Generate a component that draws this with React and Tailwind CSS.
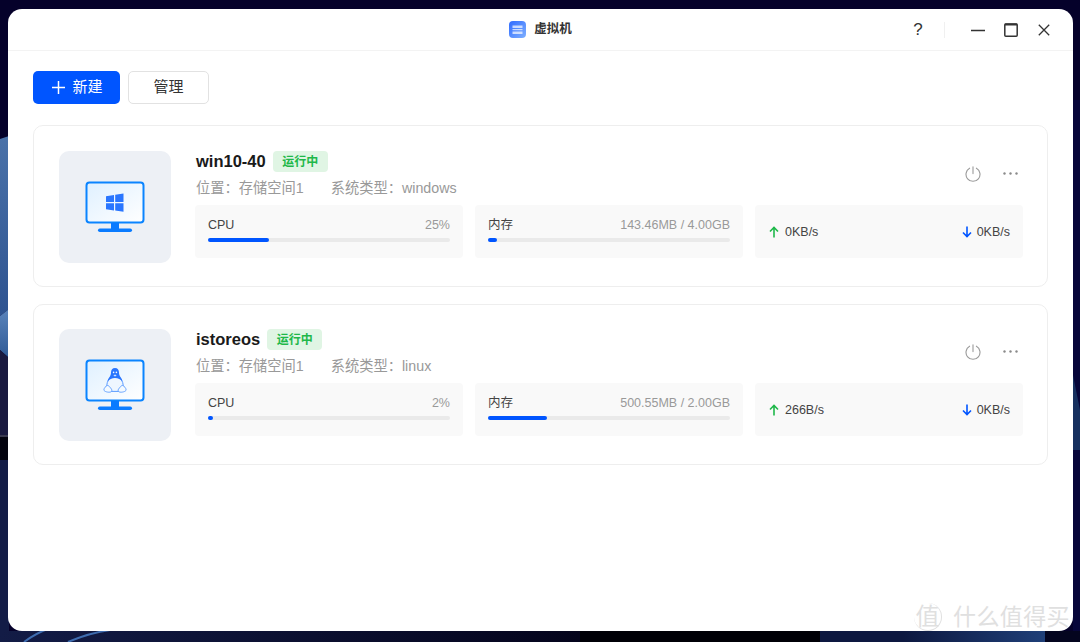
import React from 'react';

const SANS = "font-['Liberation_Sans','Noto_Sans_CJK_SC',sans-serif]";

const machines = [
  {
    name: 'win10-40',
    os: 'windows',
    cpu: 25,
    memText: '143.46MB / 4.00GB',
    mem: 3.6,
    up: '0KB/s',
    down: '0KB/s',
  },
  {
    name: 'istoreos',
    os: 'linux',
    cpu: 2,
    memText: '500.55MB / 2.00GB',
    mem: 24.4,
    up: '266B/s',
    down: '0KB/s',
  },
];

// wallpaper behind the window
const Wallpaper = () => (
  <svg className="absolute inset-0" width="1080" height="642" viewBox="0 0 1080 642">
    <defs>
      <linearGradient id="wpUpper" x1="0" y1="0" x2="0" y2="1">
        <stop offset="0" stopColor="#4a72a9" />
        <stop offset="1" stopColor="#2e5390" />
      </linearGradient>
      <linearGradient id="wpLower" x1="0" y1="0" x2="0" y2="1">
        <stop offset="0" stopColor="#5a84bb" />
        <stop offset="1" stopColor="#2f5a96" />
      </linearGradient>
      <linearGradient id="wpBottom" x1="0" y1="0" x2="1" y2="0">
        <stop offset="0" stopColor="#131c46" />
        <stop offset="1" stopColor="#04041c" />
      </linearGradient>
      <linearGradient id="wpRight" x1="0" y1="0" x2="1" y2="0">
        <stop offset="0" stopColor="#0d1840" />
        <stop offset="1" stopColor="#1f3f78" />
      </linearGradient>
    </defs>
    <rect width="1080" height="642" fill="#05012a" />
    <path d="M0 139L9 136V309L0 316Z" fill="url(#wpUpper)" />
    <path d="M0 316L9 309V358L0 350Z" fill="url(#wpLower)" />
    <path d="M0 350L9 358V435H0Z" fill="#1a1a40" />
    <rect x="0" y="435" width="9" height="2" fill="#3a3a50" />
    <rect x="0" y="437" width="9" height="23" fill="#04040f" />
    <rect x="0" y="460" width="9" height="182" fill="#131c46" />
    <rect x="0" y="631" width="580" height="11" fill="url(#wpBottom)" />
    <rect x="580" y="631" width="240" height="11" fill="#000006" />
    <rect x="820" y="631" width="83" height="11" fill="#0d1840" />
    <rect x="903" y="631" width="142" height="11" fill="url(#wpRight)" />
    <rect x="1045" y="631" width="35" height="11" fill="#04051f" />
    <path d="M24 642C32 636 42 631 50 628" stroke="#3f6db0" strokeWidth="2" fill="none" />
    <path d="M68 642C82 636 96 632 110 630" stroke="#3f6db0" strokeWidth="2" fill="none" />
    <rect x="1073" y="100" width="7" height="531" fill="#07063a" />
    <path d="M1073 375L1080 410V450H1073Z" fill="#17305f" />
  </svg>
);

const Monitor = ({ children }) => (
  <svg width="60" height="52" viewBox="0 0 60 52">
    <defs>
      <linearGradient id="screen" x1="0" y1="0" x2="1" y2="1">
        <stop offset="0" stopColor="#dff0ff" />
        <stop offset="1" stopColor="#ffffff" />
      </linearGradient>
    </defs>
    <rect x="1.5" y="1.5" width="57" height="40" rx="3" fill="url(#screen)" stroke="#0a84ff" strokeWidth="2" />
    <rect x="26" y="42" width="8" height="6" fill="#0a7bff" />
    <rect x="13" y="47.5" width="34" height="3.5" rx="1.75" fill="#0a7bff" />
    {children}
  </svg>
);

const WindowsGlyph = () => (
  <g fill="#2a76ff">
    <path d="M21 15.2L29 14V21H21Z" />
    <path d="M30.2 13.8L38.5 12.6V21H30.2Z" />
    <path d="M21 22.2H29V29.4L21 28.2Z" />
    <path d="M30.2 22.2H38.5V30.8L30.2 29.6Z" />
  </g>
);

const TuxGlyph = () => (
  <g>
    {/* body outline */}
    <path
      d="M26.2 17c-1.6 2.8-4.4 5.4-4.4 9.4 0 2.8 1.4 5 3.6 6h9.2c2.2-1 3.6-3.2 3.6-6 0-4-2.8-6.6-4.4-9.4z"
      fill="#eef6ff"
      stroke="#5a9bff"
      strokeWidth="1"
    />
    {/* head */}
    <path
      d="M30 9c-2.6 0-4 2-4 4.6 0 1.6-.4 3-1.6 4.6-1 1.3-1.8 2.8-1.8 4.4 1.6-2.2 4.4-3.6 7.4-3.6s5.8 1.4 7.4 3.6c0-1.6-.8-3.1-1.8-4.4-1.2-1.6-1.6-3-1.6-4.6C34 11 32.6 9 30 9z"
      fill="#2a76ff"
    />
    <path d="M28.4 16.4L30 15.4l1.6 1L30 17.6z" fill="#cfe3ff" />
    <circle cx="28.6" cy="13.4" r=".8" fill="#f4faff" />
    <circle cx="31.4" cy="13.4" r=".8" fill="#f4faff" />
    {/* feet */}
    <path d="M22.5 26.5c-1.8.4-3.6 2.8-3.6 4.4 0 1.6 4.6 2.9 7 2 1.4-.5 1.2-2.4-.2-3.8-1-1.1-2-2.8-3.2-2.6z" fill="#f4faff" stroke="#5a9bff" strokeWidth=".9" />
    <path d="M37.5 26.5c1.8.4 3.6 2.8 3.6 4.4 0 1.6-4.6 2.9-7 2-1.4-.5-1.2-2.4.2-3.8 1-1.1 2-2.8 3.2-2.6z" fill="#f4faff" stroke="#5a9bff" strokeWidth=".9" />
  </g>
);

const UsageCard = ({ label, value, percent }) => (
  <div className="flex-1 h-[53px] rounded bg-[#f9f9f9] px-[13px] pt-3">
    <div className="flex items-center justify-between h-4 text-[12.5px]">
      <span className="text-[#444]">{label}</span>
      <span className="text-[#999]">{value}</span>
    </div>
    <div className="mt-[5px] h-1 rounded-full bg-[#eaeaea]">
      <div className="h-1 rounded-full bg-[#0055ff]" style={{ width: `${percent}%` }} />
    </div>
  </div>
);

const UpArrow = () => (
  <svg width="10" height="12" viewBox="0 0 10 12" fill="none" stroke="#1fb84a" strokeWidth="1.6">
    <path d="M5 11.5V1.5M1 5.5L5 1.5L9 5.5" />
  </svg>
);

const DownArrow = () => (
  <svg width="10" height="12" viewBox="0 0 10 12" fill="none" stroke="#0055ff" strokeWidth="1.6">
    <path d="M5 .5V10.5M1 6.5L5 10.5L9 6.5" />
  </svg>
);

const MachineCard = ({ vm }) => (
  <div className="flex gap-6 h-[161px] first:h-[162px] first:-mt-px rounded-[10px] border border-[#eeeeee] bg-white pl-[25px] pr-6 pt-6 first:pt-[25px]">
    <div className="flex items-center justify-center w-[112px] h-[112px] shrink-0 rounded-[10px] bg-[#edf0f5]">
      <Monitor>{vm.os === 'windows' ? <WindowsGlyph /> : <TuxGlyph />}</Monitor>
    </div>
    <div className="flex-1">
      <div className="flex items-center justify-between pl-px pr-[5px]">
        <div>
          <div className="flex items-center gap-[7px] h-[21px]">
            <span className="text-[16.5px] font-bold text-[#1a1a1a]">{vm.name}</span>
            <span className="flex items-center justify-center w-[55px] h-[21px] rounded bg-[#e0f5e4] text-xs font-bold text-[#1fb84a]">
              运行中
            </span>
          </div>
          <div className="flex gap-[27px] mt-[7px] h-5 items-center text-[14.25px] text-[#999]">
            <span>位置：存储空间1</span>
            <span>系统类型：{vm.os}</span>
          </div>
        </div>
        <div className="flex items-center gap-[22px] mb-[3px]">
          <svg width="16" height="16" viewBox="0 0 16 16" fill="none" stroke="#9a9a9a" strokeWidth="1.1" strokeLinecap="round">
            <path d="M4.6 2.2A7 7 0 1 0 11.4 2.2M8 .8V7.6" />
          </svg>
          <svg width="15" height="3" viewBox="0 0 15 3" fill="#8a8a8a">
            <circle cx="1.5" cy="1.5" r="1.2" />
            <circle cx="7.5" cy="1.5" r="1.2" />
            <circle cx="13.5" cy="1.5" r="1.2" />
          </svg>
        </div>
      </div>
      <div className="flex gap-3 mt-[6px]">
        <UsageCard label="CPU" value={`${vm.cpu}%`} percent={vm.cpu} />
        <UsageCard label="内存" value={vm.memText} percent={vm.mem} />
        <div className="flex-1 h-[53px] rounded bg-[#f9f9f9] px-[13px] flex items-center justify-between text-[12.5px] text-[#444]">
          <span className="flex items-center gap-[6px] pl-px">
            <UpArrow />
            <span className="pt-[2px]">{vm.up}</span>
          </span>
          <span className="flex items-center gap-[5px]">
            <DownArrow />
            <span className="pt-[2px]">{vm.down}</span>
          </span>
        </div>
      </div>
    </div>
  </div>
);

const App = () => {
  return (
    <div className={`relative w-[1080px] h-[642px] overflow-hidden pt-[9px] pl-2 ${SANS}`}>
      <Wallpaper />
      <div className="relative flex flex-col w-[1065px] h-[622px] overflow-hidden rounded-[14px] bg-white">
        {/* title bar */}
        <div className="relative flex items-center justify-center shrink-0 h-[42px] border-b border-[#f3f3f3]">
          <div className="flex items-center gap-2">
            <svg width="17" height="17" viewBox="0 0 17 17">
              <defs>
                <linearGradient id="titleIcon" x1="0" y1="0" x2="1" y2="1">
                  <stop offset="0" stopColor="#2f6bff" />
                  <stop offset="1" stopColor="#7fb0ff" />
                </linearGradient>
              </defs>
              <rect width="17" height="17" rx="4" fill="url(#titleIcon)" />
              <rect x="3.5" y="4.5" width="10" height="2.5" fill="#fff" opacity=".7" />
              <rect x="3.5" y="8" width="10" height="1.2" fill="#fff" opacity=".7" />
              <rect x="3.5" y="10.5" width="10" height="2.5" fill="#fff" opacity=".7" />
            </svg>
            <span className="text-[12.5px] font-bold text-[#333]">虚拟机</span>
          </div>
          <div className="absolute right-[23px] top-[13px] flex items-center">
            <span className="w-4 text-center text-[17px] leading-4 text-[#333]">?</span>
            <span className="ml-[18px] h-4 w-px bg-[#f0f0f0]" />
            <svg className="ml-[26px]" width="14" height="14" viewBox="0 0 14 14" stroke="#333" strokeWidth="1.4" fill="none">
              <path d="M0 7.5H14" />
            </svg>
            <svg className="ml-[19px]" width="14" height="14" viewBox="0 0 14 14" stroke="#333" strokeWidth="1.5" fill="none">
              <rect x=".8" y="1" width="12.4" height="12.2" rx="1" />
              <path d="M.8 1.6H13.2" strokeWidth="2" />
            </svg>
            <svg className="ml-[20px]" width="12" height="12" viewBox="0 0 12 12" stroke="#333" strokeWidth="1.3" fill="none">
              <path d="M.8.8L11.2 11.2M11.2.8L.8 11.2" />
            </svg>
          </div>
        </div>

        {/* content */}
        <div className="flex-1 px-[25px] pt-[20px]">
          <div className="flex gap-2">
            <button className="flex items-center justify-center gap-[7px] w-[87px] h-[33px] pl-[2px] rounded-[5px] bg-[#0055ff] text-[15px] text-white">
              <svg width="13" height="13" viewBox="0 0 13 13" stroke="#fff" strokeWidth="1.5" fill="none">
                <path d="M6.5 0V13M0 6.5H13" />
              </svg>
              新建
            </button>
            <button className="w-[81px] h-[33px] rounded-[5px] border border-[#e2e2e2] bg-white text-[15px] text-[#333]">
              管理
            </button>
          </div>
          <div className="flex flex-col gap-[17px] mt-[22px]">
            {machines.map((vm) => (
              <MachineCard key={vm.name} vm={vm} />
            ))}
          </div>
        </div>

        {/* site watermark */}
        <div className="absolute right-[3px] bottom-0 flex items-center gap-[11px] text-[#e0e0e0]">
          <span className="flex items-center justify-center w-[28px] h-[28px] rounded-full border-r border-b border-[#e0e0e0] text-[24px] leading-none">
            值
          </span>
          <span className="text-[23px] leading-7 tracking-[0.4px]">什么值得买</span>
        </div>
      </div>
    </div>
  );
};

export default App;
